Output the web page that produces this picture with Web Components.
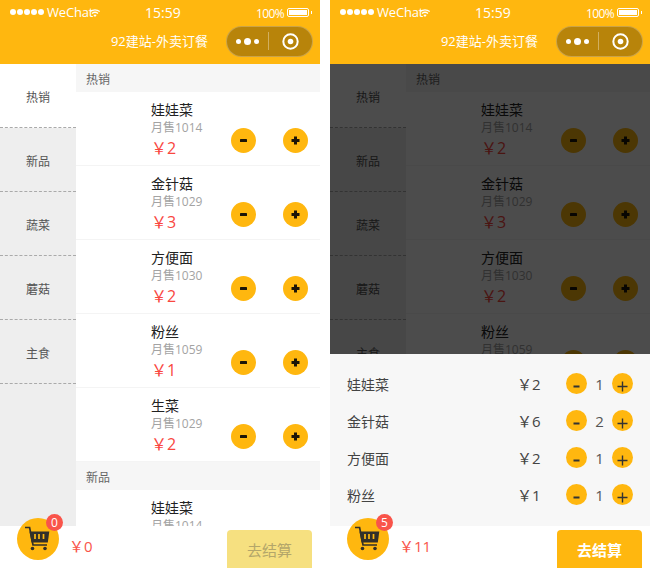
<!DOCTYPE html>
<html lang="zh">
<head>
<meta charset="utf-8">
<title>92建站-外卖订餐</title>
<style>
    html, body { margin: 0; padding: 0; background: #fff; }
    body {
        width: 650px;
        height: 568px;
        overflow: hidden;
        display: flex;
        gap: 10px;
        font-family: "Noto Sans CJK SC", "Open Sans", sans-serif;
    }
</style>
</head>
<body>

<order-phone total="0" count="0">
    <food-section title="热销">
        <food-row name="娃娃菜" sold="1014" price="2"></food-row>
        <food-row name="金针菇" sold="1029" price="3"></food-row>
        <food-row name="方便面" sold="1030" price="2"></food-row>
        <food-row name="粉丝" sold="1059" price="1"></food-row>
        <food-row name="生菜" sold="1029" price="2"></food-row>
    </food-section>
    <food-section title="新品">
        <food-row name="娃娃菜" sold="1014" price="2"></food-row>
    </food-section>
</order-phone>

<order-phone total="11" count="5" open>
    <food-section title="热销">
        <food-row name="娃娃菜" sold="1014" price="2"></food-row>
        <food-row name="金针菇" sold="1029" price="3"></food-row>
        <food-row name="方便面" sold="1030" price="2"></food-row>
        <food-row name="粉丝" sold="1059" price="1"></food-row>
    </food-section>
    <cart-row slot="cart" name="娃娃菜" price="2" qty="1"></cart-row>
    <cart-row slot="cart" name="金针菇" price="6" qty="2"></cart-row>
    <cart-row slot="cart" name="方便面" price="2" qty="1"></cart-row>
    <cart-row slot="cart" name="粉丝" price="1" qty="1"></cart-row>
</order-phone>

<script>
const LATIN = '"Open Sans", "Noto Sans CJK SC", sans-serif';

let statusTemplate = document.createElement('template');
statusTemplate.innerHTML = `
<style>
    :host {
        display: block;
        background: #ffb70f;
        color: #fff;
        height: 64px;
        box-sizing: border-box;
        font-family: ${LATIN};
    }
    .status {
        height: 24px;
        display: flex;
        align-items: center;
        padding-left: 10px;
        font-size: 12px;
    }
    .dots { display: flex; gap: 1px; width: 37px; }
    .dots i { width: 6px; height: 6px; border-radius: 50%; background: #fff; }
    .carrier { width: 43px; font-size: 13px; letter-spacing: -0.2px; }
    .wifi { width: 10px; height: 8px; margin-top: 1px; }
    .time { margin-left: 45px; width: 111px; font-size: 14px; }
    .pct { font-size: 12px; letter-spacing: -0.6px; width: 31px; margin-top: 2px; }
    .battery {
        width: 18px;
        height: 5px;
        border: 1px solid #fff;
        border-radius: 2px;
        padding: 1px;
        background: #fff content-box;
    }
    .nub { width: 1px; height: 3px; background: #fff; margin-left: 2px; }
    .nav {
        height: 40px;
        display: flex;
        align-items: center;
        justify-content: flex-end;
        padding-right: 7px;
    }
    .title { font-size: 13px; margin-right: 18px; margin-top: -8px; }
    .capsule {
        width: 87px;
        height: 31px;
        box-sizing: border-box;
        margin-top: -6px;
        border-radius: 16px;
        border: 1px solid rgba(255,255,255,0.25);
        background: rgba(0,0,0,0.28);
        display: flex;
        align-items: center;
    }
    .more { width: 32px; margin-left: 9px; display: flex; align-items: center; gap: 3px; }
    .more i { border-radius: 50%; background: #fff; width: 5px; height: 5px; }
    .more i:nth-child(2) { width: 7px; height: 7px; }
    .line { width: 1px; height: 18px; background: rgba(255,255,255,0.35); }
    .target { margin-left: 13px; width: 17px; height: 17px; }
</style>
<div class="status">
    <div class="dots"><i></i><i></i><i></i><i></i><i></i></div>
    <span class="carrier">WeChat</span>
    <svg class="wifi" viewBox="0 0 10 8" fill="none" stroke="#fff" stroke-width="1.3">
        <path d="M0.3 2.6C3 0.3 7 0.3 9.7 2.6"/>
        <path d="M2 4.5C3.8 3 6.2 3 8 4.5"/>
        <path d="M5 8L3.3 6C4.3 5.2 5.7 5.2 6.7 6Z" fill="#fff" stroke="none"/>
    </svg>
    <span class="time">15:59</span>
    <span class="pct">100%</span>
    <span class="battery"></span>
    <span class="nub"></span>
</div>
<div class="nav">
    <span class="title">92建站-外卖订餐</span>
    <div class="capsule">
        <div class="more"><i></i><i></i><i></i></div>
        <span class="line"></span>
        <svg class="target" viewBox="0 0 17 17">
            <circle cx="8.5" cy="8.5" r="7.2" fill="none" stroke="#fff" stroke-width="2"/>
            <circle cx="8.5" cy="8.5" r="2.8" fill="#fff"/>
        </svg>
    </div>
</div>
`;

customElements.define('status-head', class extends HTMLElement {
    constructor() {
        super();
        this.attachShadow({mode: 'open'}).appendChild(statusTemplate.content.cloneNode(true));
    }
});

let tabTemplate = document.createElement('template');
tabTemplate.innerHTML = `
<style>
    :host {
        display: flex;
        height: 64px;
        box-sizing: border-box;
        align-items: center;
        justify-content: center;
        border-bottom: 1px dashed #aaa;
        font-size: 12px;
        color: #555;
        background: #eee;
        padding-top: 2px;
    }
    :host([active]) { background: #fff; }
</style>
<slot></slot>
`;

customElements.define('side-tab', class extends HTMLElement {
    constructor() {
        super();
        this.attachShadow({mode: 'open'}).appendChild(tabTemplate.content.cloneNode(true));
    }
});

let sectionTemplate = document.createElement('template');
sectionTemplate.innerHTML = `
<style>
    :host { display: block; }
    .head {
        height: 28px;
        line-height: 30px;
        padding-left: 10px;
        background: #f6f6f6;
        font-size: 12px;
        color: #666;
    }
</style>
<div class="head"></div>
<slot></slot>
`;

customElements.define('food-section', class extends HTMLElement {
    constructor() {
        super();
        this.attachShadow({mode: 'open'}).appendChild(sectionTemplate.content.cloneNode(true));
        this.shadowRoot.querySelector('.head').textContent = this.getAttribute('title');
    }
});

let foodTemplate = document.createElement('template');
foodTemplate.innerHTML = `
<style>
    :host {
        display: flex;
        height: 74px;
        box-sizing: border-box;
        padding: 7px 12px 12px 75px;
        border-bottom: 1px solid #f4f4f4;
        background: #fff;
        align-items: flex-end;
    }
    .info { width: 80px; align-self: flex-start; }
    .name { font-size: 14px; line-height: 20px; color: #222; }
    .sold { font-size: 12px; line-height: 18px; color: #a3a3a3; font-family: ${LATIN}; }
    .price { font-size: 16px; line-height: 22px; color: #f9473f; font-family: ${LATIN}; }
    .btns { display: flex; gap: 27px; }
    .btn {
        width: 25px;
        height: 25px;
        border-radius: 50%;
        background: #ffb70f;
        display: flex;
        align-items: center;
        justify-content: center;
    }
    .btn svg { width: 9px; height: 9px; }
</style>
<div class="info">
    <div class="name"></div>
    <div class="sold"></div>
    <div class="price"></div>
</div>
<div class="btns">
    <div class="btn"><svg viewBox="0 0 9 9"><rect x="1" y="3" width="7" height="3" rx="0.6" fill="#1c1407"/></svg></div>
    <div class="btn"><svg viewBox="0 0 9 9"><path d="M3 0.5h3V3h2.5v3H6v2.5H3V6H0.5V3H3Z" fill="#1c1407"/></svg></div>
</div>
`;

customElements.define('food-row', class extends HTMLElement {
    constructor() {
        super();
        let root = this.attachShadow({mode: 'open'});
        root.appendChild(foodTemplate.content.cloneNode(true));
        root.querySelector('.name').textContent = this.getAttribute('name');
        root.querySelector('.sold').textContent = '月售' + this.getAttribute('sold');
        root.querySelector('.price').textContent = '\uFFE5' + this.getAttribute('price');
    }
});

let cartRowTemplate = document.createElement('template');
cartRowTemplate.innerHTML = `
<style>
    :host {
        display: flex;
        height: 37px;
        align-items: center;
        padding: 0 17px 0 17px;
        font-size: 14px;
        color: #444;
    }
    .name { flex: 1; }
    .price { width: 49px; font-size: 15px; font-family: ${LATIN}; }
    .btn {
        width: 21px;
        height: 21px;
        border-radius: 50%;
        background: #ffb70f;
        display: flex;
        align-items: center;
        justify-content: center;
    }
    .btn svg { width: 11px; height: 11px; margin-top: 5px; }
    .qty { width: 25px; text-align: center; font-size: 15px; color: #555; font-family: ${LATIN}; }
</style>
<span class="name"></span>
<span class="price"></span>
<span class="btn"><svg viewBox="0 0 11 11"><rect x="2.5" y="4.5" width="6" height="2" fill="#333"/></svg></span>
<span class="qty"></span>
<span class="btn"><svg viewBox="0 0 11 11"><path d="M0.5 5.5h10M5.5 0.5v10" stroke="#333" stroke-width="1.4" fill="none"/></svg></span>
`;

customElements.define('cart-row', class extends HTMLElement {
    constructor() {
        super();
        let root = this.attachShadow({mode: 'open'});
        root.appendChild(cartRowTemplate.content.cloneNode(true));
        root.querySelector('.name').textContent = this.getAttribute('name');
        root.querySelector('.price').textContent = '\uFFE5' + this.getAttribute('price');
        root.querySelector('.qty').textContent = this.getAttribute('qty');
    }
});

let phoneTemplate = document.createElement('template');
phoneTemplate.innerHTML = `
<style>
    :host {
        display: flex;
        flex-direction: column;
        position: relative;
        width: 320px;
        height: 568px;
        overflow: hidden;
        background: #fff;
    }
    .main { flex: 1; display: flex; min-height: 0; position: relative; }
    .side { width: 76px; background: #eee; flex: none; }
    .list { flex: 1; overflow: hidden; }
    .shade {
        display: none;
        position: absolute;
        inset: 0;
        background: rgba(0,0,0,0.7);
    }
    .sheet {
        display: none;
        position: absolute;
        left: 0;
        right: 0;
        bottom: 0;
        height: 172px;
        box-sizing: border-box;
        padding-top: 11px;
        background: #f7f7f7;
    }
    :host([open]) .shade, :host([open]) .sheet { display: block; }
    .foot {
        height: 42px;
        flex: none;
        background: #fff;
        display: flex;
        align-items: center;
        padding-left: 69px;
        padding-right: 8px;
        position: relative;
    }
    .total { flex: 1; color: #f9544a; font-size: 15px; font-family: ${LATIN}; line-height: 20px; margin-top: -2px; }
    .pay {
        width: 85px;
        height: 38px;
        margin-top: 4px;
        border-radius: 4px 4px 0 0;
        background: #ffb70f;
        color: #fff;
        font-size: 15px;
        font-weight: 700;
        display: flex;
        align-items: center;
        justify-content: center;
    }
    :host(:not([open])) .pay {
        background: #f6e080;
        color: #b3a66a;
        font-weight: 400;
    }
    .cart {
        position: absolute;
        left: 17px;
        top: -8px;
        width: 42px;
        height: 42px;
        border-radius: 50%;
        background: #ffb70f;
    }
    .cart svg { display: block; width: 42px; height: 42px; }
    .badge {
        position: absolute;
        left: 29px;
        top: -4px;
        width: 17px;
        height: 17px;
        border-radius: 50%;
        background: #f9544a;
        color: #fff;
        font-size: 12px;
        line-height: 17px;
        text-align: center;
        font-family: ${LATIN};
    }
</style>
<status-head></status-head>
<div class="main">
    <div class="side">
        <side-tab active>热销</side-tab>
        <side-tab>新品</side-tab>
        <side-tab>蔬菜</side-tab>
        <side-tab>蘑菇</side-tab>
        <side-tab>主食</side-tab>
    </div>
    <div class="list"><slot></slot></div>
    <div class="shade"></div>
    <div class="sheet"><slot name="cart"></slot></div>
</div>
<div class="foot">
    <div class="cart">
        <svg viewBox="0 0 42 42" fill="none" stroke="#33302a">
            <path d="M8 9.5h4.6L16 27h14" stroke-width="1.7"/>
            <path d="M12.5 13.5h19.8L30.8 24.5H14.5Z" fill="#33302a" stroke="none"/>
            <path d="M18 16v5M22 16v5M26.5 16v5" stroke="#ffb70f" stroke-width="1.7"/>
            <circle cx="15.5" cy="30.5" r="1.8" fill="#33302a" stroke="none"/>
            <circle cx="28" cy="30.5" r="1.8" fill="#33302a" stroke="none"/>
        </svg>
        <span class="badge"></span>
    </div>
    <span class="total"></span>
    <span class="pay">去结算</span>
</div>
`;

customElements.define('order-phone', class extends HTMLElement {
    constructor() {
        super();
        let root = this.attachShadow({mode: 'open'});
        root.appendChild(phoneTemplate.content.cloneNode(true));
        root.querySelector('.badge').textContent = this.getAttribute('count');
        root.querySelector('.total').textContent = '\uFFE5' + this.getAttribute('total');
    }
});
</script>
</body>
</html>
